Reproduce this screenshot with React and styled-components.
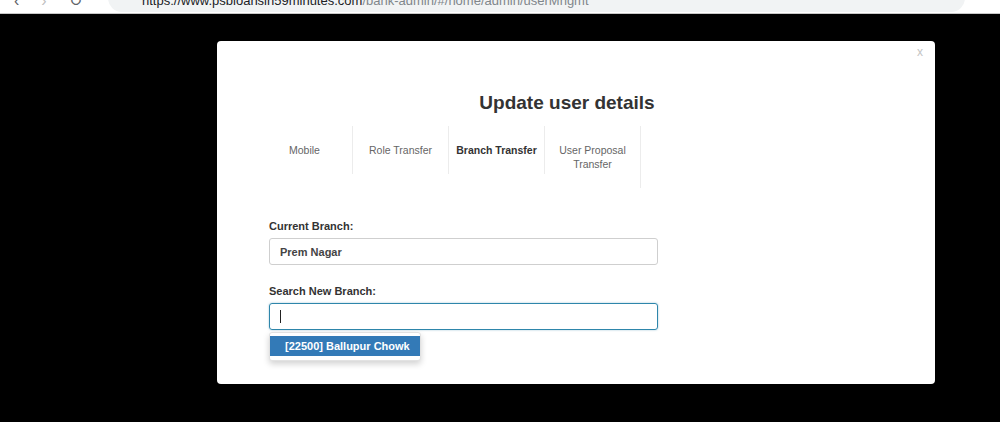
import React from 'react';
import styled, { createGlobalStyle } from 'styled-components';

const GlobalStyle = createGlobalStyle`
  html, body {
    margin: 0;
    padding: 0;
    background: #000;
    font-family: "Liberation Sans", Arial, sans-serif;
  }
`;

const Page = styled.div`
  width: 1000px;
  height: 422px;
  background: #000;
  overflow: hidden;
`;

const ChromeBar = styled.div`
  height: 13px;
  background: #fff;
  border-bottom: 1px solid #c8c8c8;
  display: flex;
  align-items: flex-end;
  overflow: hidden;
`;

const NavIcons = styled.div`
  width: 108px;
  display: flex;
  gap: 22px;
  padding-left: 14px;
  box-sizing: border-box;
  color: #5f6368;
  font-size: 16px;
  line-height: 16px;
  margin-bottom: 4px;
`;

const UrlPill = styled.div`
  flex: 1;
  height: 24px;
  margin-right: 35px;
  margin-bottom: 1px;
  background: #f1f3f4;
  border-radius: 0 0 14px 14px;
  display: flex;
  align-items: flex-end;
  padding: 0 0 4px 34px;
  box-sizing: border-box;
  font-size: 13px;
  line-height: 14px;
  color: #202124;
  white-space: nowrap;
  overflow: hidden;
  span {
    color: #80868b;
  }
`;

const Overlay = styled.div`
  padding: 27px 0 0 217px;
`;

const Modal = styled.div`
  position: relative;
  width: 718px;
  height: 343px;
  background: #fff;
  border-radius: 4px;
  box-sizing: border-box;
  padding-top: 51px;
`;

const Close = styled.div`
  position: absolute;
  top: 4px;
  right: 12px;
  font-size: 12px;
  color: #c4c4c4;
`;

const Title = styled.h2`
  margin: 0;
  padding-right: 18px;
  text-align: center;
  font-size: 19px;
  line-height: 22px;
  font-weight: bold;
  color: #333;
`;

const Tabs = styled.div`
  display: flex;
  align-items: flex-start;
  margin: 12px 0 0 40px;
`;

const Tab = styled.div`
  width: 96px;
  box-sizing: border-box;
  padding: 17px 4px;
  border-right: 1px solid #ececec;
  text-align: center;
  font-size: 10.5px;
  line-height: 14px;
  white-space: ${(p) => (p.active ? 'nowrap' : 'normal')};
  color: ${(p) => (p.active ? '#333' : '#666')};
  font-weight: ${(p) => (p.active ? 'bold' : 'normal')};
`;

const Form = styled.div`
  margin: 31px 0 0 52px;
  width: 389px;
`;

const Field = styled.div`
  position: relative;
  margin-bottom: 19px;
`;

const Label = styled.div`
  font-size: 11px;
  font-weight: bold;
  color: #333;
  line-height: 14px;
  margin-bottom: 5px;
`;

const Input = styled.div`
  height: 27px;
  box-sizing: border-box;
  border: 1px solid ${(p) => (p.focused ? '#2e86ab' : '#cfcfcf')};
  box-shadow: ${(p) => (p.focused ? '0 0 2px rgba(46, 134, 171, 0.5)' : 'none')};
  border-radius: 3px;
  padding: 0 10px;
  display: flex;
  align-items: center;
  font-size: 11px;
  font-weight: bold;
  color: #444;
`;

const Caret = styled.span`
  width: 1px;
  height: 13px;
  background: #222;
`;

const Menu = styled.div`
  position: absolute;
  top: 48px;
  left: 0;
  width: 152px;
  padding: 3px 0 4px;
  background: #fff;
  border: 1px solid #e2e2e2;
  border-radius: 3px;
  box-shadow: 0 3px 6px rgba(0, 0, 0, 0.18);
  box-sizing: border-box;
`;

const MenuItem = styled.div`
  height: 20px;
  line-height: 20px;
  padding-left: 15px;
  font-size: 11px;
  font-weight: bold;
  color: ${(p) => (p.active ? '#fff' : '#333')};
  background: ${(p) => (p.active ? '#337ab7' : 'transparent')};
`;

const tabs = [
  { label: 'Mobile' },
  { label: 'Role Transfer' },
  { label: 'Branch Transfer', active: true },
  { label: 'User Proposal Transfer' },
];

const App = () => {
  return (
    <Page>
      <GlobalStyle />
      <ChromeBar>
        <NavIcons>
          <span>‹</span>
          <span style={{ color: '#c0c0c0' }}>›</span>
          <span>↻</span>
        </NavIcons>
        <UrlPill>
          https://www.psbloansin59minutes.com<span>/bank-admin/#/home/admin/userMngmt</span>
        </UrlPill>
      </ChromeBar>
      <Overlay>
        <Modal>
          <Close>x</Close>
          <Title>Update user details</Title>
          <Tabs>
            {tabs.map((t) => (
              <Tab key={t.label} active={t.active}>
                {t.label}
              </Tab>
            ))}
          </Tabs>
          <Form>
            <Field>
              <Label>Current Branch:</Label>
              <Input>Prem Nagar</Input>
            </Field>
            <Field>
              <Label>Search New Branch:</Label>
              <Input focused>
                <Caret />
              </Input>
              <Menu>
                <MenuItem active>[22500] Ballupur Chowk</MenuItem>
              </Menu>
            </Field>
          </Form>
        </Modal>
      </Overlay>
    </Page>
  );
};

export default App;
